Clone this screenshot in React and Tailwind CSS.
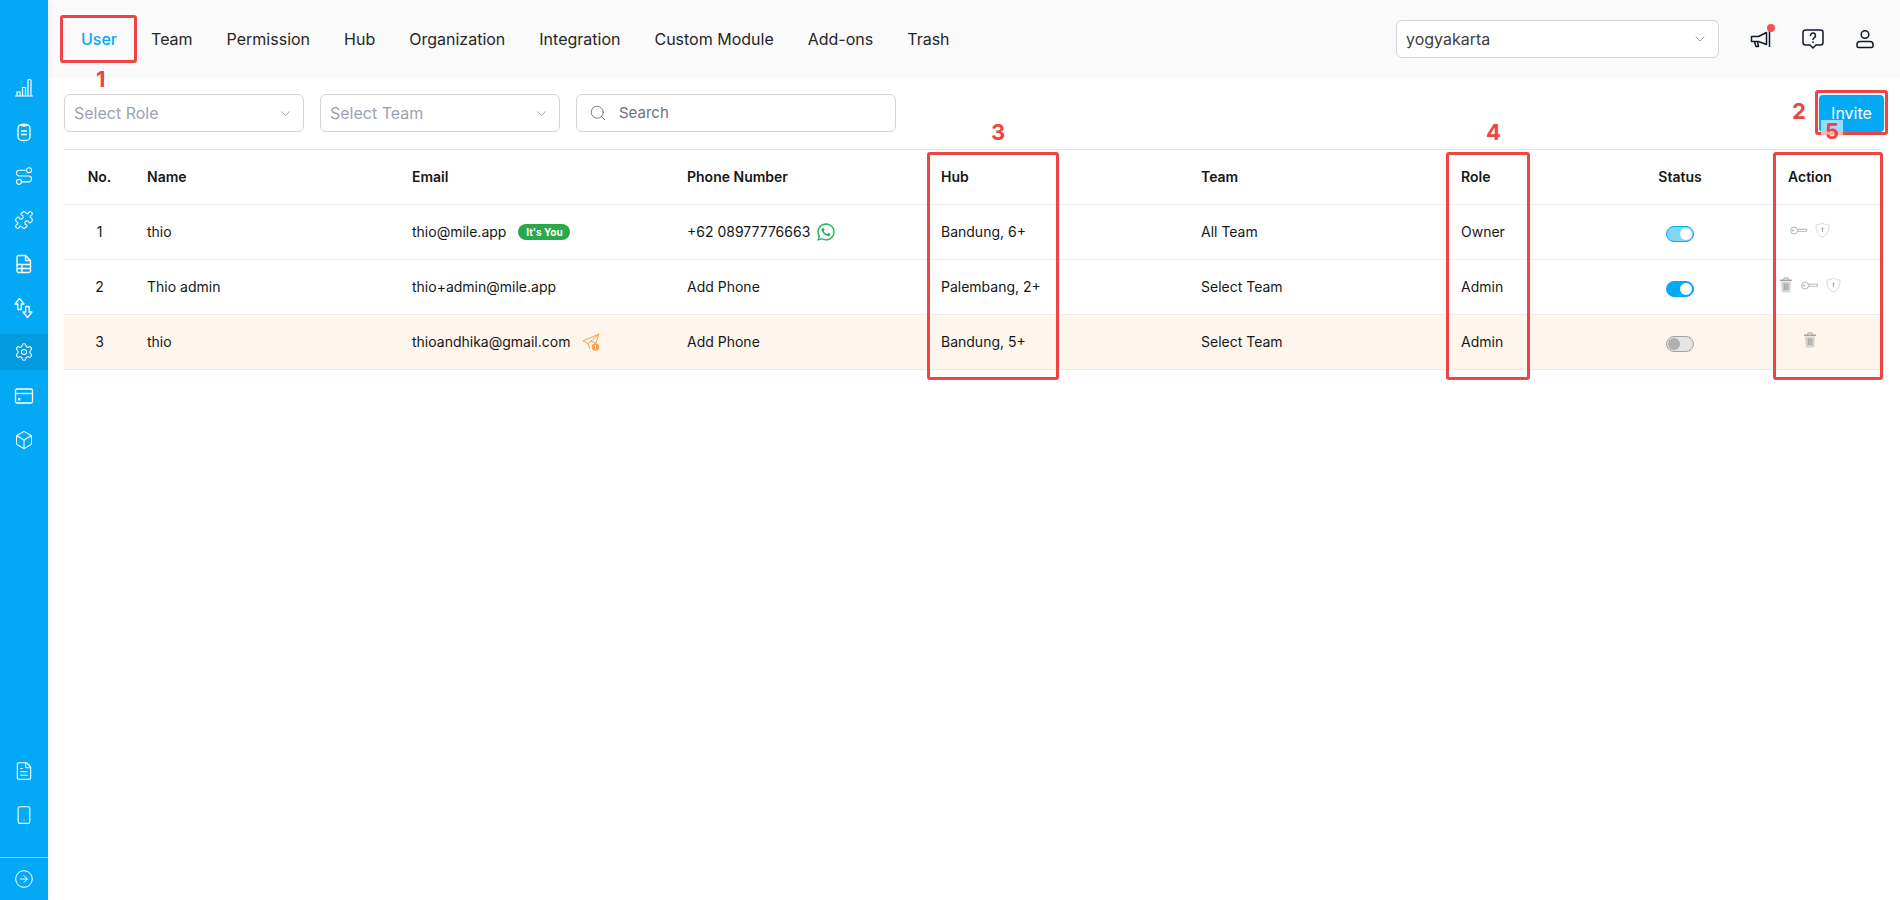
import { Box, ChevronDown, CircleArrowRight, FileText, Puzzle, Route, Search, Settings, Smartphone } from 'lucide-react';
import { FaWhatsapp } from 'react-icons/fa';

const tabs = ['User', 'Team', 'Permission', 'Hub', 'Organization', 'Integration', 'Custom Module', 'Add-ons', 'Trash'];

const BarsIcon = () => (
  <svg width="20" height="20" viewBox="0 0 20 20" fill="none" stroke="currentColor" strokeWidth="1.2">
    <path d="M1 18h18M3 18v-4h3v4M8.5 18V9.5h3V18M14 18V2.5a1 1 0 0 1 1-1h1a1 1 0 0 1 1 1V18" />
  </svg>
);

const OrderIcon = () => (
  <svg width="20" height="20" viewBox="0 0 20 20" fill="none" stroke="currentColor" strokeWidth="1.3">
    <rect x="4" y="2.5" width="12" height="16" rx="4" />
    <path d="M7 2.8c1 1.6 5 1.6 6 0M7 9h6M7 12.5h6" />
  </svg>
);

const SheetIcon = () => (
  <svg width="20" height="20" viewBox="0 0 20 20" fill="none" stroke="currentColor" strokeWidth="1.3">
    <path d="M4.5 1.5h7l5 5v10.5a1.5 1.5 0 0 1-1.500 1.500h-10.500a1.500 1.500 0 0 1-1.500-1.500v-14a1.500 1.500 0 0 1 1.500-1.500z" />
    <path d="M11.500 1.500v5h5M3 10.500h13.500M3 14.500h13.500M8 10.500v8" />
  </svg>
);

const TransferIcon = () => (
  <svg width="22" height="22" viewBox="0 0 22 22" fill="none" stroke="currentColor" strokeWidth="1.3" strokeLinejoin="round">
    <path d="M6.500 1.500l-4.500 5.500h2.800v5.500h3.500V7H11z" />
    <path d="M14.500 20.500l4.500-5.500h-2.800V9.500h-3.500V15H10z" />
  </svg>
);

const CardIcon = () => (
  <svg width="20" height="20" viewBox="0 0 20 20" fill="none" stroke="currentColor" strokeWidth="1.3">
    <rect x="1.500" y="3" width="17" height="14" rx="1.500" />
    <path d="M1.500 7.500h17" />
    <rect x="4" y="12" width="2.400" height="2.400" fill="currentColor" stroke="none" />
  </svg>
);

const KeyIcon = () => (
  <svg width="17" height="9" viewBox="0 0 17 9" fill="none" stroke="#9ca3af" strokeWidth="0.8">
    <circle cx="4" cy="4.500" r="3.500" />
    <circle cx="2.800" cy="4.500" r="0.800" />
    <path d="M7.500 3.200h9v2h-1.200l-.8.800-.8-.8-.8.800-.8-.8-.8.800-.8-.8H7.500" />
  </svg>
);

const ShieldIcon = () => (
  <svg width="15" height="16" viewBox="0 0 15 16" fill="none" stroke="#d1d5db" strokeWidth="0.9">
    <path d="M7.500 1C5.500 2.400 3.500 2.900 1 3c-.2 5.500 1.500 9.700 6.500 12 5-2.300 6.700-6.500 6.500-12-2.500-.1-4.500-.6-6.500-2z" />
    <circle cx="7.500" cy="6.500" r="1" fill="#9ca3af" stroke="none" />
    <path d="M7.500 7v3" stroke="#9ca3af" />
  </svg>
);

const TrashIcon = () => (
  <svg width="14" height="16" viewBox="0 0 14 16">
    <path d="M1 2.500h12v1.500H1z" fill="#a3a3a3" />
    <path d="M4.500 2.500 5 1h4l.5 1.500" fill="none" stroke="#a3a3a3" />
    <path d="M2 4.500h10l-.7 10a1 1 0 0 1-1 .9H3.700a1 1 0 0 1-1-.9z" fill="#d4d4d4" />
    <path d="M5.300 6.500v6.500M7 6.500v6.500M8.700 6.500v6.500" stroke="#8f8f8f" strokeWidth="0.8" />
  </svg>
);

const PlaneIcon = () => (
  <svg width="18" height="18" viewBox="0 0 18 18" fill="none">
    <path d="M17 1 1 8l5 2.500L8 16M17 1 6 10.500M17 1l-3 9-5-2" stroke="#f6a04d" strokeWidth="1" strokeLinejoin="round" />
    <circle cx="13.500" cy="14" r="3.700" fill="#f6a04d" />
    <path d="M13.500 11.800v2.600M13.500 15.300v.8" stroke="#fff" strokeWidth="1" />
  </svg>
);

const MegaphoneIcon = () => (
  <svg width="24" height="24" viewBox="0 0 24 24" fill="none" stroke="#111827" strokeWidth="1.500" strokeLinejoin="round">
    <path d="M2.500 9.500h7l8-4v12l-8-3h-7z" />
    <path d="M5.500 14.500l1.500 5h2.500l-1-5M20.500 4v16" />
  </svg>
);

const HelpIcon = () => (
  <svg width="24" height="24" viewBox="0 0 24 24" fill="none" stroke="#111827" strokeWidth="1.500" strokeLinejoin="round">
    <path d="M4.500 3h15A2.500 2.500 0 0 1 22 5.500v10a2.500 2.500 0 0 1-2.500 2.500H15l-3 3-3-3H4.500A2.500 2.500 0 0 1 2 15.500v-10A2.500 2.500 0 0 1 4.500 3z" />
    <path d="M9.500 8.500a2.500 2.500 0 1 1 3.800 2.100c-.9.600-1.300 1-1.300 2" strokeLinecap="round" />
    <path d="M12 15v.5" strokeLinecap="round" />
  </svg>
);

const UserIcon = () => (
  <svg width="24" height="24" viewBox="0 0 24 24" fill="none" stroke="#111827" strokeWidth="1.500">
    <circle cx="12" cy="7.500" r="3.800" />
    <path d="M7 14.500h10a3 3 0 0 1 3 3v1.500a1.500 1.500 0 0 1-1.500 1.500h-13A1.500 1.500 0 0 1 4 19v-1.500a3 3 0 0 1 3-3z" />
  </svg>
);

const Toggle = ({ state }) => {
  if (state === 'off') {
    return (
      <span className="inline-flex h-4 w-7 items-center rounded-full border border-[#a3a3a3] bg-[#e5e5e5] pl-[1px]">
        <span className="h-3 w-3 rounded-full bg-[#b0b0b0]" />
      </span>
    );
  }
  return (
    <span className={`inline-flex h-4 w-7 items-center justify-end rounded-full border border-[#03a9f4] pr-[1px] ${state === 'on' ? 'bg-[#03a9f4]' : 'bg-[#81d4fa]'}`}>
      <span className="h-3 w-3 rounded-full bg-white" />
    </span>
  );
};

const FilterSelect = ({ label }) => (
  <div className="flex h-[38px] w-[240px] items-center justify-between rounded-md border border-[#d4d4d4] bg-white pl-[9px] pr-[10px] text-base text-[#9ca3af]">
    <span>{label}</span>
    <ChevronDown size={15} strokeWidth={1.5} className="text-[#9ca3af]" />
  </div>
);

const Marker = ({ className, children }) => (
  <span className={`absolute text-[22px] font-bold leading-none text-[#ef4444] ${className}`}>{children}</span>
);

const rows = [
  {
    no: 1,
    name: 'thio',
    email: 'thio@mile.app',
    phone: '+62 08977776663',
    hub: 'Bandung, 6+',
    team: 'All Team',
    role: 'Owner',
    status: 'locked',
    actions: (
      <>
        <KeyIcon />
        <ShieldIcon />
      </>
    ),
  },
  {
    no: 2,
    name: 'Thio admin',
    email: 'thio+admin@mile.app',
    phone: 'Add Phone',
    hub: 'Palembang, 2+',
    team: 'Select Team',
    role: 'Admin',
    status: 'on',
    actions: (
      <>
        <TrashIcon />
        <KeyIcon />
        <ShieldIcon />
      </>
    ),
  },
  {
    no: 3,
    name: 'thio',
    email: 'thioandhika@gmail.com',
    phone: 'Add Phone',
    hub: 'Bandung, 5+',
    team: 'Select Team',
    role: 'Admin',
    status: 'off',
    actions: <TrashIcon />,
  },
];

const App = () => {
  return (
    <div className="relative flex h-screen w-full overflow-hidden bg-white font-['Inter',sans-serif] text-[#171717]">
      <aside className="z-10 flex h-full w-12 shrink-0 flex-col bg-[#03a9f4] text-white shadow-[2px_0_8px_rgba(0,0,0,0.05)]">
        <nav className="flex flex-1 flex-col gap-2 pt-[70px]">
          {[<BarsIcon />, <OrderIcon />, <Route size={20} strokeWidth={1.3} />, <Puzzle size={20} strokeWidth={1.3} />, <SheetIcon />, <TransferIcon />].map((icon, i) => (
            <div key={i} className="flex h-9 items-center justify-center">{icon}</div>
          ))}
          <div className="flex h-9 items-center justify-center bg-[#039be0]">
            <Settings size={20} strokeWidth={1.3} />
          </div>
          <div className="flex h-9 items-center justify-center"><CardIcon /></div>
          <div className="flex h-9 items-center justify-center"><Box size={20} strokeWidth={1.3} /></div>
        </nav>
        <div className="flex flex-col gap-2 pb-6">
          <div className="flex h-9 items-center justify-center"><FileText size={20} strokeWidth={1.3} /></div>
          <div className="flex h-9 items-center justify-center"><Smartphone size={20} strokeWidth={1.3} /></div>
        </div>
        <div className="flex h-[43px] items-center justify-center border-t border-[#81d4fa]">
          <CircleArrowRight size={20} strokeWidth={1.2} />
        </div>
      </aside>

      <main className="flex min-w-0 flex-1 flex-col">
        <header className="flex h-[78px] shrink-0 items-center bg-[#fafafa] pl-4 pr-[23px]">
          {tabs.map((tab, i) => (
            <div key={tab} className={`px-[17px] text-base ${i === 0 ? 'font-medium text-[#03a9f4]' : 'text-[#262626]'}`}>{tab}</div>
          ))}
          <div className="ml-auto mr-[30px] flex h-[38px] w-[323px] items-center justify-between rounded-md border border-[#d4d4d4] bg-white pl-[9px] pr-[10px] text-base text-[#404040]">
            <span>yogyakarta</span>
            <ChevronDown size={16} strokeWidth={1.5} className="text-[#9ca3af]" />
          </div>
          <div className="flex items-center gap-7">
            <div className="relative">
              <MegaphoneIcon />
              <span className="absolute -top-[3px] right-[-2px] h-2 w-2 rounded-full bg-[#ef5350]" />
            </div>
            <HelpIcon />
            <UserIcon />
          </div>
        </header>

        <div className="flex items-center gap-4 px-4 pt-4">
          <FilterSelect label="Select Role" />
          <FilterSelect label="Select Team" />
          <div className="flex h-[38px] w-[320px] items-center gap-3 rounded-md border border-[#d4d4d4] bg-white px-3 text-[15px] text-[#6b7280]">
            <Search size={18} strokeWidth={1.2} className="text-[#6b7280]" />
            <span>Search</span>
          </div>
          <button className="ml-auto h-[37px] w-[65px] rounded bg-[#03a9f4] text-base text-white">Invite</button>
        </div>

        <div className="mt-[17px] px-4">
          <table className="w-full table-fixed border-t border-[#e5e5e5] text-left text-sm">
            <colgroup>
              <col className="w-[71px]" />
              <col className="w-[265px]" />
              <col className="w-[275px]" />
              <col className="w-[254px]" />
              <col className="w-[260px]" />
              <col className="w-[260px]" />
              <col className="w-[135px]" />
              <col className="w-[192px]" />
              <col className="w-[108px]" />
            </colgroup>
            <thead>
              <tr className="h-[55px] border-b border-[#ececf1] font-semibold">
                <th className="text-center font-semibold">No.</th>
                <th className="pl-3 font-semibold">Name</th>
                <th className="pl-3 font-semibold">Email</th>
                <th className="pl-3 font-semibold">Phone Number</th>
                <th className="pl-3 font-semibold">Hub</th>
                <th className="pl-3 font-semibold">Team</th>
                <th className="pl-3 font-semibold">Role</th>
                <th className="text-center font-semibold">Status</th>
                <th className="pl-3 font-semibold">Action</th>
              </tr>
            </thead>
            <tbody>
              {rows.map((row) => (
                <tr key={row.no} className={`h-[55px] border-b border-[#ececf1] ${row.no === 3 ? 'bg-[#fef5ec]' : ''}`}>
                  <td className="text-center">{row.no}</td>
                  <td className="pl-3">{row.name}</td>
                  <td className="pl-3">
                    <div className="flex items-center">
                      <span>{row.email}</span>
                      {row.no === 1 && (
                        <span className="ml-3 flex h-4 w-[52px] items-center justify-center rounded-full bg-[#2ba84a] text-[10px] font-bold text-white">It's You</span>
                      )}
                      {row.no === 3 && (
                        <span className="ml-3"><PlaneIcon /></span>
                      )}
                    </div>
                  </td>
                  <td className="pl-3">
                    <div className="flex items-center gap-[6px]">
                      <span>{row.phone}</span>
                      {row.no === 1 && <FaWhatsapp size={20} className="text-[#25b35f]" />}
                    </div>
                  </td>
                  <td className="pl-3">{row.hub}</td>
                  <td className="pl-3">{row.team}</td>
                  <td className="pl-3">{row.role}</td>
                  <td className="text-center"><div className="flex justify-center pt-1"><Toggle state={row.status} /></div></td>
                  <td>
                    <div className="flex items-center justify-center gap-2 pb-1 pr-10">{row.actions}</div>
                  </td>
                </tr>
              ))}
            </tbody>
          </table>
        </div>
      </main>

      <div className="pointer-events-none absolute left-[60px] top-[15px] h-[48px] w-[77px] rounded-[3px] border-[3px] border-[#ef4444]" />
      <div className="pointer-events-none absolute left-[1815px] top-[90px] h-[45px] w-[73px] rounded-[3px] border-[3px] border-[#ef4444]" />
      <div className="pointer-events-none absolute left-[927px] top-[152px] h-[228px] w-[132px] rounded-[3px] border-[3px] border-[#ef4444]" />
      <div className="pointer-events-none absolute left-[1446px] top-[152px] h-[228px] w-[84px] rounded-[3px] border-[3px] border-[#ef4444]" />
      <div className="pointer-events-none absolute left-[1773px] top-[152px] h-[228px] w-[110px] rounded-[3px] border-[3px] border-[#ef4444]" />

      <Marker className="left-[96px] top-[68px]">1</Marker>
      <Marker className="left-[1792px] top-[100px]">2</Marker>
      <Marker className="left-[991px] top-[121px]">3</Marker>
      <Marker className="left-[1486px] top-[121px]">4</Marker>
      <Marker className="left-[1821px] top-[120px] bg-white/60 px-[4px]">5</Marker>
    </div>
  );
};

export default App;
